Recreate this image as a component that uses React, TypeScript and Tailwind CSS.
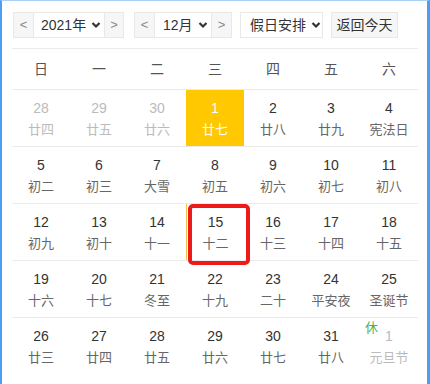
import React from "react";

type Day = { n: number; l: string; other?: boolean; sel?: boolean; today?: boolean; rest?: boolean };

const rows: Day[][] = [
  [
    { n: 28, l: "廿四", other: true },
    { n: 29, l: "廿五", other: true },
    { n: 30, l: "廿六", other: true },
    { n: 1, l: "廿七", sel: true },
    { n: 2, l: "廿八" },
    { n: 3, l: "廿九" },
    { n: 4, l: "宪法日" },
  ],
  [
    { n: 5, l: "初二" },
    { n: 6, l: "初三" },
    { n: 7, l: "大雪" },
    { n: 8, l: "初五" },
    { n: 9, l: "初六" },
    { n: 10, l: "初七" },
    { n: 11, l: "初八" },
  ],
  [
    { n: 12, l: "初九" },
    { n: 13, l: "初十" },
    { n: 14, l: "十一" },
    { n: 15, l: "十二", today: true },
    { n: 16, l: "十三" },
    { n: 17, l: "十四" },
    { n: 18, l: "十五" },
  ],
  [
    { n: 19, l: "十六" },
    { n: 20, l: "十七" },
    { n: 21, l: "冬至" },
    { n: 22, l: "十九" },
    { n: 23, l: "二十" },
    { n: 24, l: "平安夜" },
    { n: 25, l: "圣诞节" },
  ],
  [
    { n: 26, l: "廿三" },
    { n: 27, l: "廿四" },
    { n: 28, l: "廿五" },
    { n: 29, l: "廿六" },
    { n: 30, l: "廿七" },
    { n: 31, l: "廿八" },
    { n: 1, l: "元旦节", other: true, rest: true },
  ],
];

const weeks = ["日", "一", "二", "三", "四", "五", "六"];

function Chevron() {
  return (
    <svg width="10" height="8" viewBox="0 0 10 8" className="ml-[5px]">
      <path d="M1.5 2 L5 5.5 L8.5 2" fill="none" stroke="#333" strokeWidth="2.2" />
    </svg>
  );
}

function Arrow({ ch, w }: { ch: string; w: string }) {
  return (
    <div className={`${w} h-full flex items-center justify-center bg-[#f6f6f6] text-[#888] text-[13px]`}>{ch}</div>
  );
}

export default function App() {
  return (
    <div
      className="w-[430px] h-[384px] bg-white border-l-2 border-r-[3px] border-t border-l-[#4d9ef2] border-r-[#4d9ef2] border-t-[#a9d0f7] pl-[10px] pr-[9px] pt-[11px] overflow-hidden text-[#333]"
      style={{ fontFamily: '"Liberation Sans", "Noto Sans CJK SC", sans-serif' }}
    >
      <div className="flex items-center h-[26px] text-[14px]">
        <div className="flex h-full border border-[#e8e8e8] ml-[1px]">
          <Arrow ch="<" w="w-[19px]" />
          <div className="w-[72px] h-full flex items-center pl-[7px] border-x border-[#e8e8e8] bg-white">
            2021年<Chevron />
          </div>
          <Arrow ch=">" w="w-[18px]" />
        </div>
        <div className="flex h-full border border-[#e8e8e8] ml-[10px]">
          <Arrow ch="<" w="w-[19px]" />
          <div className="w-[58px] h-full flex items-center pl-[8px] border-x border-[#e8e8e8] bg-white">
            12月<Chevron />
          </div>
          <Arrow ch=">" w="w-[19px]" />
        </div>
        <div className="ml-[8px] w-[83px] h-full flex items-center pl-[9px] border border-[#e8e8e8] bg-white">
          假日安排<Chevron />
        </div>
        <div className="ml-[8px] w-[67px] h-full flex items-center justify-center border border-[#e8e8e8] bg-[#f6f6f6]">
          返回今天
        </div>
      </div>
      <div className="mt-[10px] border-t border-[#ebebeb] grid grid-cols-7 h-[41px] items-center text-[14px] text-[#555]">
        {weeks.map((w) => (
          <div key={w} className="text-center">
            {w}
          </div>
        ))}
      </div>
      {rows.map((r, i) => (
        <div key={i} className="grid grid-cols-7 border-t border-[#ebebeb] h-[57px]">
          {r.map((d, j) => (
            <div
              key={j}
              className={`relative flex flex-col items-center pt-[8px] ${d.sel ? "bg-[#ffc800] text-white" : ""} ${
                d.today ? "border-l border-[#f5c04a]" : ""
              }`}
            >
              <div
                className={`text-[14px] leading-[20px] ${
                  d.sel ? "text-white" : d.other ? "text-[#bbb]" : "text-[#333]"
                }`}
              >
                {d.n}
              </div>
              <div
                className={`text-[13px] leading-[20px] mt-[2px] ${
                  d.sel ? "text-white" : d.other ? "text-[#bbb]" : "text-[#666]"
                }`}
              >
                {d.l}
              </div>
              {d.rest && <div className="absolute left-[5px] top-[1px] text-[13px] leading-[18px] text-[#4caf50]">休</div>}
              {d.today && (
                <div className="absolute left-[1px] top-0 w-[62px] h-[61px] border-[4px] border-[#ee1a1a] rounded-[5px]" />
              )}
            </div>
          ))}
        </div>
      ))}
    </div>
  );
}
